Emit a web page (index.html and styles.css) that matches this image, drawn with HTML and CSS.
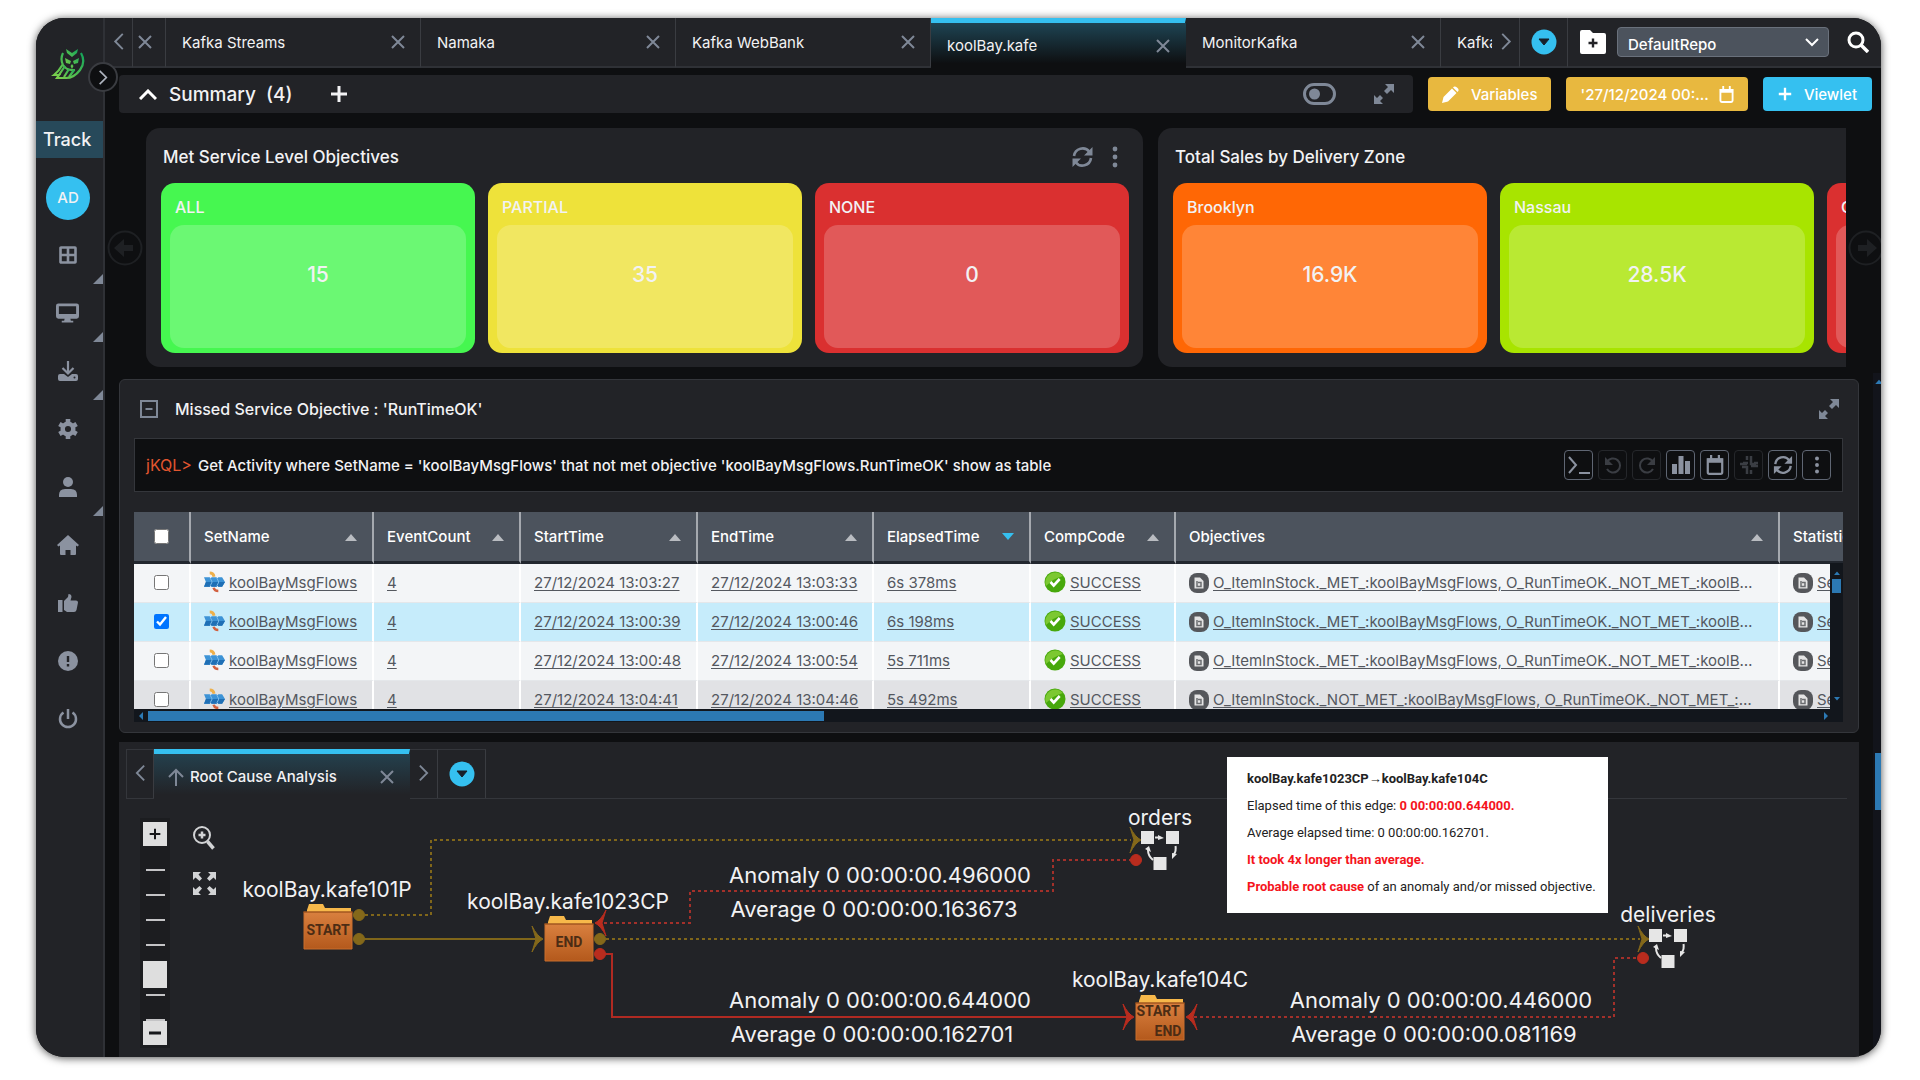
FILE: index.html
```html
<!DOCTYPE html>
<html lang="en">
<head>
    <meta charset="UTF-8">
    <meta name="viewport" content="width=device-width, initial-scale=1.0">
    <title>koolBay.kafe</title>
    <link rel="stylesheet" href="styles.css">
</head>
<body>
<!-- icon sprite -->
<svg class="sprite" aria-hidden="true">
    <symbol id="left" viewBox="0 0 12 18"><path d="M10 1L2 9l8 8" fill="none" stroke="currentColor" stroke-width="2"/></symbol>
    <symbol id="right" viewBox="0 0 12 18"><path d="M2 1l8 8-8 8" fill="none" stroke="currentColor" stroke-width="2"/></symbol>
    <symbol id="close" viewBox="0 0 14 14"><path d="M1 1l12 12M13 1L1 13" fill="none" stroke="currentColor" stroke-width="2"/></symbol>
    <symbol id="plus" viewBox="0 0 18 18"><path d="M9 1v16M1 9h16" fill="none" stroke="currentColor" stroke-width="3"/></symbol>
    <symbol id="drop" viewBox="0 0 26 26"><circle cx="13" cy="13" r="12.500" fill="#35c0f0"/><path d="M8 10h10l-5 6z" fill="#17202a" stroke="#17202a" stroke-linejoin="round"/></symbol>
    <symbol id="expand" viewBox="0 0 20 20"><path d="M11 0h9v9l-3-3-4 4-3-3 4-4zM9 20H0v-9l3 3 3-3 3 3-3 3z" fill="currentColor"/></symbol>
    <symbol id="refresh" viewBox="0 0 22 22"><path d="M2.500 10A8.600 8.600 0 0 1 18 6M19.500 12A8.600 8.600 0 0 1 4 16" fill="none" stroke="currentColor" stroke-width="2.600"/><path d="M21 1v8.500h-8.500zM1 21v-8.500h8.500z" fill="currentColor"/></symbol>
    <symbol id="dots" viewBox="0 0 6 22"><g fill="currentColor"><circle cx="3" cy="3" r="2.400"/><circle cx="3" cy="11" r="2.400"/><circle cx="3" cy="19" r="2.400"/></g></symbol>
    <symbol id="calendar" viewBox="0 0 16 18"><path d="M1.500 4h13v11.500a1.500 1.500 0 0 1-1.500 1.500H3a1.500 1.500 0 0 1-1.500-1.500zM4.500 0v4M11.500 0v4" fill="none" stroke="currentColor" stroke-width="2"/><path d="M1 3h14v4H1z" fill="currentColor"/></symbol>
    <symbol id="sort" viewBox="0 0 12 8"><path d="M0 8L6 1l6 7z" fill="currentColor"/></symbol>
    <symbol id="undo" viewBox="0 0 18 18"><path d="M3 6a7 7 0 1 1 0 7" fill="none" stroke="currentColor" stroke-width="2"/><path d="M1 1v8h8z" fill="currentColor"/></symbol>
    <symbol id="flow" viewBox="0 0 22 22"><path d="M6 1.500q4 0 4.500 4" fill="none" stroke="#eeb04a" stroke-width="3"/><path d="M10 17q1 3.500 5 3.500" fill="none" stroke="#d2603f" stroke-width="2.600"/><path d="M0 6h6l1 1 1-1h5l1 1 1-1h4l3 5-3 5h-4l-1-1-1 1H8l-1-1-1 1H0l2-5z" fill="#3d93d6"/><path d="M0 16l2-5h20l-3 5h-4l-1-1-1 1H8l-1-1-1 1z" fill="#1f6fb5"/><path d="M6.500 7l2 4-2 4M13.500 7l2 4-2 4" fill="none" stroke="#7fbdea"/></symbol>
    <symbol id="ok" viewBox="0 0 22 22"><circle cx="11" cy="11" r="10.500" fill="#47a80c"/><path d="M2 15A10 10 0 0 1 19 5Q10 7 2 15z" fill="#7cc832"/><path d="M6.500 11l3.200 3.500 6-6.500" fill="none" stroke="#fff" stroke-width="2.600"/></symbol>
    <symbol id="doc" viewBox="0 0 20 20"><rect width="20" height="20" rx="8" fill="#55575b"/><path d="M5.500 4.500h5.500l3.500 3.500v7.500h-9z" fill="#e4e4e4"/><path d="M8 8v5.500h4v-4h-3" fill="none" stroke="#6b6d70" stroke-width="1.500"/></symbol>
    <symbol id="round-arrow" viewBox="0 0 36 36"><circle cx="18" cy="18" r="16.500" fill="none" stroke="currentColor" stroke-width="2"/><path d="M7 18l10-9v6h9v6h-9v6z" fill="currentColor"/></symbol>
</svg>

<div class="window">
    <nav class="sidebar">
        <div class="logo">
            <svg width="34" height="32" viewBox="0 0 34 32" aria-label="Logo">
                <defs><linearGradient id="owl" x1="0" y1="1" x2="1" y2="0"><stop offset="0" stop-color="#7fd04a"/><stop offset="1" stop-color="#12a45a"/></linearGradient></defs>
                <g fill="none" stroke="url(#owl)" stroke-width="2.200">
                    <path d="M12 4Q9 10 12 16q4 6 12 5M30 4q5 9-1 17-6 8-14 8H6l2-3H3q5-4 9-11"/>
                    <path d="M8 26l6-9M13 28l5-8M18 28l5-7"/>
                </g>
                <path d="M15 0l6 4 6-4-1 4-5 4-5-4zM14 9l6 3-1 3-4-1zM28 9l-6 3 1 3 4-1zM21 15l1.500 2-1.500 3-1.500-3z" fill="url(#owl)"/>
            </svg>
        </div>
        <button class="sidebar-toggle" aria-label="Open menu"><svg width="10" height="15"><use href="#right"/></svg></button>
        <div class="section-name">Track</div>
        <div class="avatar">AD</div>
        <a class="nav-item has-sub" href="#" aria-label="Dashboards"><svg width="18" height="18" viewBox="0 0 18 18"><path d="M2 1.500h14q.5 0 .5.500v14q0 .5-.5.500H2q-.5 0-.5-.5V2q0-.5.5-.5zM9 1v16M1 9h16" fill="none" stroke="currentColor" stroke-width="2.600"/></svg></a>
        <a class="nav-item has-sub" href="#" aria-label="Monitor"><svg width="23" height="20" viewBox="0 0 24 20"><path d="M2.500 0h19A2.500 2.500 0 0 1 24 2.500v11a2.500 2.500 0 0 1-2.500 2.500H15l.5 2H18v2H6v-2h2.500l.5-2H2.500A2.500 2.500 0 0 1 0 13.500v-11A2.500 2.500 0 0 1 2.500 0zM3 3v8h18V3z" fill="currentColor"/></svg></a>
        <a class="nav-item has-sub" href="#" aria-label="Import"><svg width="20" height="20" viewBox="0 0 20 20"><path d="M10 0v12M4.500 7l5.500 5.500L15.500 7" fill="none" stroke="currentColor" stroke-width="2.200"/><path d="M2 13h4l4 3 4-3h4q2 0 2 2v3q0 2-2 2H2q-2 0-2-2v-3q0-2 2-2z" fill="currentColor"/><circle cx="16.500" cy="16.500" r="1" fill="#222327"/></svg></a>
        <a class="nav-item" href="#" aria-label="Settings"><svg width="20" height="20" viewBox="0 0 20 20"><circle cx="10" cy="10" r="5.300" fill="none" stroke="currentColor" stroke-width="4.500"/><path d="M10 0v4M10 16v4M1.400 5l3.400 2M15.200 13l3.400 2M1.400 15l3.400-2M15.200 7l3.400-2" stroke="currentColor" stroke-width="4.600"/></svg></a>
        <a class="nav-item has-sub" href="#" aria-label="Users"><svg width="18" height="20" viewBox="0 0 18 20"><circle cx="9" cy="5" r="5" fill="currentColor"/><path d="M0 20v-2q0-6 6-6h6q6 0 6 6v2z" fill="currentColor"/></svg></a>
        <a class="nav-item" href="#" aria-label="Home"><svg width="22" height="20" viewBox="0 0 22 20"><path d="M11 0l11 10-1.500 1.500L19 10.500V19q0 1-1 1h-4.500v-5h-5v5H4q-1 0-1-1v-8.500l-1.500 1L0 10z" fill="currentColor"/></svg></a>
        <a class="nav-item" href="#" aria-label="Feedback"><svg width="20" height="18" viewBox="0 0 20 18"><path d="M0 6h4.500v12H0zM6 7l4-4 .5-3q3 0 3 3l-1 3.500H18q2 0 2 2L18.500 16q-.5 2-2.500 2H9l-3-2z" fill="currentColor"/></svg></a>
        <a class="nav-item" href="#" aria-label="Alerts"><svg width="20" height="20" viewBox="0 0 20 20"><circle cx="10" cy="10" r="10" fill="currentColor"/><path d="M10 5v6M10 13v2.500" stroke="#222327" stroke-width="2.400"/></svg></a>
        <a class="nav-item" href="#" aria-label="Log out"><svg width="20" height="20" viewBox="0 0 20 20"><path d="M10 0v10M5.500 3.500a8 8 0 1 0 9 0" fill="none" stroke="currentColor" stroke-width="2.500"/></svg></a>
    </nav>

    <main class="main">
        <header class="topbar">
            <button class="tab-nav" aria-label="Previous tabs"><svg width="12" height="17"><use href="#left"/></svg></button>
            <div class="tabs">
                <div class="tab tab-cut"><button class="close" aria-label="Close"><svg width="14" height="14"><use href="#close"/></svg></button></div>
                <div class="tab"><span>Kafka Streams</span><button class="close" aria-label="Close"><svg width="14" height="14"><use href="#close"/></svg></button></div>
                <div class="tab"><span>Namaka</span><button class="close" aria-label="Close"><svg width="14" height="14"><use href="#close"/></svg></button></div>
                <div class="tab"><span>Kafka WebBank</span><button class="close" aria-label="Close"><svg width="14" height="14"><use href="#close"/></svg></button></div>
                <div class="tab active"><span>koolBay.kafe</span><button class="close" aria-label="Close"><svg width="14" height="14"><use href="#close"/></svg></button></div>
                <div class="tab"><span>MonitorKafka</span><button class="close" aria-label="Close"><svg width="14" height="14"><use href="#close"/></svg></button></div>
                <div class="tab"><span>Kafka</span></div>
            </div>
            <button class="tab-nav" aria-label="Next tabs"><svg width="12" height="17"><use href="#right"/></svg></button>
            <button class="tab-list" aria-label="All tabs"><svg width="26" height="26"><use href="#drop"/></svg></button>
            <div class="repo">
                <button class="plain" aria-label="New folder"><svg width="26" height="24" viewBox="0 0 26 24"><path d="M2 0h8l3 3h11q2 0 2 2v17q0 2-2 2H2q-2 0-2-2V2q0-2 2-2z" fill="#fff"/><path d="M13 8.500v9M8.500 13h9" stroke="#222327" stroke-width="2.400"/></svg></button>
                <label class="repo-select">
                    <select aria-label="Repository"><option>DefaultRepo</option></select>
                    <svg width="14" height="9" viewBox="0 0 14 9"><path d="M1 1l6 6 6-6" fill="none" stroke="#fff" stroke-width="2"/></svg>
                </label>
                <button class="plain" aria-label="Search"><svg width="22" height="22" viewBox="0 0 22 22"><circle cx="9" cy="9" r="7" fill="none" stroke="#fff" stroke-width="3"/><path d="M14 14l7 7" stroke="#fff" stroke-width="3.500"/></svg></button>
            </div>
        </header>

        <div class="toolbar">
            <div class="summary">
                <svg width="18" height="11" viewBox="0 0 18 11"><path d="M1 10l8-8 8 8" fill="none" stroke="#fff" stroke-width="3"/></svg>
                <h2>Summary &nbsp;(4)</h2>
                <button class="plain" aria-label="Add"><svg width="18" height="18"><use href="#plus"/></svg></button>
                <button class="plain muted toggle" aria-label="Toggle"><svg width="33" height="22" viewBox="0 0 33 22"><rect x="1.500" y="1.500" width="30" height="19" rx="9.500" fill="none" stroke="currentColor" stroke-width="3"/><circle cx="11.500" cy="11" r="5.500" fill="currentColor"/></svg></button>
                <button class="plain muted" aria-label="Expand"><svg width="20" height="20"><use href="#expand"/></svg></button>
            </div>
            <button class="btn gold"><svg width="17" height="17" viewBox="0 0 17 17"><path d="M0 17l1.500-6L10 2.500 14.500 7 6 15.500zM11 1.500Q12.500-.5 15 1.500q3 2.500.5 4.500z" fill="#fff"/></svg>Variables</button>
            <button class="btn gold date">'27/12/2024 00:...<svg width="15" height="17"><use href="#calendar"/></svg></button>
            <button class="btn blue"><svg width="14" height="14"><use href="#plus"/></svg>Viewlet</button>
        </div>

        <section class="viewlets">
            <button class="scroll-arrow" aria-label="Scroll left"><svg width="36" height="36"><use href="#round-arrow"/></svg></button>
            <div class="viewlet-strip">
                <article class="viewlet">
                    <header><h3>Met Service Level Objectives</h3><button class="plain muted" aria-label="Refresh"><svg width="23" height="22"><use href="#refresh"/></svg></button><button class="plain muted" aria-label="More"><svg width="6" height="22"><use href="#dots"/></svg></button></header>
                    <div class="tiles">
                        <div class="tile green"><h4>ALL</h4><p>15</p></div>
                        <div class="tile yellow"><h4>PARTIAL</h4><p>35</p></div>
                        <div class="tile red"><h4>NONE</h4><p>0</p></div>
                    </div>
                </article>
                <article class="viewlet">
                    <header><h3>Total Sales by Delivery Zone</h3></header>
                    <div class="tiles">
                        <div class="tile orange"><h4>Brooklyn</h4><p>16.9K</p></div>
                        <div class="tile lime"><h4>Nassau</h4><p>28.5K</p></div>
                        <div class="tile red"><h4>Queens</h4><p></p></div>
                    </div>
                </article>
            </div>
            <button class="scroll-arrow flip" aria-label="Scroll right"><svg width="36" height="36"><use href="#round-arrow"/></svg></button>
        </section>

        <div class="page">
            <section class="panel">
                <header class="panel-head">
                    <button class="plain muted" aria-label="Collapse"><svg width="18" height="18" viewBox="0 0 18 18"><path d="M1 1h16v16H1zM5.500 9h7" fill="none" stroke="currentColor" stroke-width="2"/></svg></button>
                    <h3>Missed Service Objective : 'RunTimeOK'</h3>
                    <button class="plain muted" aria-label="Expand"><svg width="20" height="20"><use href="#expand"/></svg></button>
                </header>
                <div class="query">
                    <span class="prompt">jKQL&gt;</span>
                    <span class="query-text">Get Activity where SetName = 'koolBayMsgFlows' that not met objective 'koolBayMsgFlows.RunTimeOK' show as table</span>
                    <div class="query-tools">
                        <button aria-label="Console"><svg width="22" height="20" viewBox="0 0 22 20"><path d="M1 2l7 8-7 8M11 18h11" fill="none" stroke="currentColor" stroke-width="2"/></svg></button>
                        <button aria-label="Undo" disabled><svg width="18" height="18"><use href="#undo"/></svg></button>
                        <button aria-label="Redo" disabled><svg class="mirror" width="18" height="18"><use href="#undo"/></svg></button>
                        <button aria-label="Chart"><svg width="18" height="18" viewBox="0 0 18 18"><path d="M0 8h5v10H0zM6.500 0h5v18h-5zM13 5h5v13h-5z" fill="currentColor"/></svg></button>
                        <button aria-label="Dates"><svg width="18" height="20"><use href="#calendar"/></svg></button>
                        <button aria-label="Slack" disabled><svg width="18" height="18" viewBox="0 0 18 18"><path d="M7 0v4M11 0v8h5M18 7h-4M7 8H0M2 11h5v7M11 14v4M11 10h7M3 7h5" fill="none" stroke="currentColor" stroke-width="2.500"/></svg></button>
                        <button aria-label="Refresh"><svg width="20" height="20"><use href="#refresh"/></svg></button>
                        <button aria-label="More"><svg width="6" height="18"><use href="#dots"/></svg></button>
                    </div>
                </div>

                <div class="grid">
                    <table>
                        <colgroup><col class="c-check"><col class="c-set"><col class="c-count"><col class="c-start"><col class="c-end"><col class="c-elapsed"><col class="c-comp"><col class="c-obj"><col class="c-stat"></colgroup>
                        <thead>
                            <tr>
                                <th><input type="checkbox" aria-label="Select all"></th>
                                <th><div>SetName<svg width="12" height="8"><use href="#sort"/></svg></div></th>
                                <th><div>EventCount<svg width="12" height="8"><use href="#sort"/></svg></div></th>
                                <th><div>StartTime<svg width="12" height="8"><use href="#sort"/></svg></div></th>
                                <th><div>EndTime<svg width="12" height="8"><use href="#sort"/></svg></div></th>
                                <th><div>ElapsedTime<svg class="desc" width="12" height="8"><use href="#sort"/></svg></div></th>
                                <th><div>CompCode<svg width="12" height="8"><use href="#sort"/></svg></div></th>
                                <th><div>Objectives<svg width="12" height="8"><use href="#sort"/></svg></div></th>
                                <th><div>Statistics</div></th>
                            </tr>
                        </thead>
                        <tbody>
                            <tr>
                                <td><input type="checkbox" aria-label="Select row"></td>
                                <td><svg width="21" height="22"><use href="#flow"/></svg><a href="#">koolBayMsgFlows</a></td>
                                <td><a href="#">4</a></td>
                                <td><a href="#">27/12/2024 13:03:27</a></td>
                                <td><a href="#">27/12/2024 13:03:33</a></td>
                                <td><a href="#">6s 378ms</a></td>
                                <td><svg width="22" height="22"><use href="#ok"/></svg><a href="#">SUCCESS</a></td>
                                <td class="long"><svg width="20" height="20"><use href="#doc"/></svg><a href="#">O_ItemInStock._MET_:koolBayMsgFlows, O_RunTimeOK._NOT_MET_:koolBayMsgFlows</a></td>
                                <td><svg width="20" height="20"><use href="#doc"/></svg><a href="#">Set statistics</a></td>
                            </tr>
                            <tr class="selected">
                                <td><input type="checkbox" aria-label="Select row" checked></td>
                                <td><svg width="21" height="22"><use href="#flow"/></svg><a href="#">koolBayMsgFlows</a></td>
                                <td><a href="#">4</a></td>
                                <td><a href="#">27/12/2024 13:00:39</a></td>
                                <td><a href="#">27/12/2024 13:00:46</a></td>
                                <td><a href="#">6s 198ms</a></td>
                                <td><svg width="22" height="22"><use href="#ok"/></svg><a href="#">SUCCESS</a></td>
                                <td class="long"><svg width="20" height="20"><use href="#doc"/></svg><a href="#">O_ItemInStock._MET_:koolBayMsgFlows, O_RunTimeOK._NOT_MET_:koolBayMsgFlows</a></td>
                                <td><svg width="20" height="20"><use href="#doc"/></svg><a href="#">Set statistics</a></td>
                            </tr>
                            <tr>
                                <td><input type="checkbox" aria-label="Select row"></td>
                                <td><svg width="21" height="22"><use href="#flow"/></svg><a href="#">koolBayMsgFlows</a></td>
                                <td><a href="#">4</a></td>
                                <td><a href="#">27/12/2024 13:00:48</a></td>
                                <td><a href="#">27/12/2024 13:00:54</a></td>
                                <td><a href="#">5s 711ms</a></td>
                                <td><svg width="22" height="22"><use href="#ok"/></svg><a href="#">SUCCESS</a></td>
                                <td class="long"><svg width="20" height="20"><use href="#doc"/></svg><a href="#">O_ItemInStock._MET_:koolBayMsgFlows, O_RunTimeOK._NOT_MET_:koolBayMsgFlows</a></td>
                                <td><svg width="20" height="20"><use href="#doc"/></svg><a href="#">Set statistics</a></td>
                            </tr>
                            <tr class="shade">
                                <td><input type="checkbox" aria-label="Select row"></td>
                                <td><svg width="21" height="22"><use href="#flow"/></svg><a href="#">koolBayMsgFlows</a></td>
                                <td><a href="#">4</a></td>
                                <td><a href="#">27/12/2024 13:04:41</a></td>
                                <td><a href="#">27/12/2024 13:04:46</a></td>
                                <td><a href="#">5s 492ms</a></td>
                                <td><svg width="22" height="22"><use href="#ok"/></svg><a href="#">SUCCESS</a></td>
                                <td class="long"><svg width="20" height="20"><use href="#doc"/></svg><a href="#">O_ItemInStock._NOT_MET_:koolBayMsgFlows, O_RunTimeOK._NOT_MET_:koolBayMsgFlows</a></td>
                                <td><svg width="20" height="20"><use href="#doc"/></svg><a href="#">Set statistics</a></td>
                            </tr>
                        </tbody>
                    </table>
                    <div class="v-scroll"><svg width="6" height="4"><use href="#sort"/></svg><i></i><svg class="down" width="6" height="4"><use href="#sort"/></svg></div>
                </div>
                <div class="h-scroll"><svg width="4" height="8" viewBox="0 0 4 8"><path d="M4 0v8L0 4z" fill="currentColor"/></svg><i></i><svg class="end" width="4" height="8" viewBox="0 0 4 8"><path d="M0 0v8l4-4z" fill="currentColor"/></svg></div>
            </section>

            <section class="panel analysis">
                <header class="subtabs">
                    <button class="tab-nav" aria-label="Previous"><svg width="11" height="20"><use href="#left"/></svg></button>
                    <div class="tab active">
                        <svg class="up" width="16" height="18" viewBox="0 0 16 18"><path d="M8 18V2M1 9l7-7 7 7" fill="none" stroke="currentColor" stroke-width="2"/></svg>
                        <span>Root Cause Analysis</span>
                        <button class="close" aria-label="Close"><svg width="14" height="14"><use href="#close"/></svg></button>
                    </div>
                    <button class="tab-nav" aria-label="Next"><svg width="11" height="20"><use href="#right"/></svg></button>
                    <button class="tab-list" aria-label="All tabs"><svg width="26" height="26"><use href="#drop"/></svg></button>
                </header>

                <div class="canvas">
                    <svg class="graph" width="1740" height="260" viewBox="120 799 1740 260">
                        <defs>
                            <linearGradient id="box" x1="0" y1="0" x2="0" y2="1"><stop offset="0" stop-color="#d9803f"/><stop offset="1" stop-color="#b4591c"/></linearGradient>
                            <g id="folder">
                                <path d="M4 6l2-6h14l2 4h26v6H4z" fill="#f7b84a"/>
                                <path d="M1 8h48v37H1z" fill="url(#box)" stroke="#c96f2d"/>
                                <path d="M0 8h50" stroke="#8f4a1b"/>
                            </g>
                            <g id="cycle" fill="#e6e6e6">
                                <path d="M0 0h13v13H0zM25 0h13v13H25zM12.500 26h13v13h-13z"/>
                                <path d="M17 4l6 3-6 2zM31 22l5 1-5 5zM4 18l4-3 2 6z"/>
                                <path d="M14 6.500h5M34.500 15q1 5-2 9M7 19q0 6 5 10" fill="none" stroke="#e6e6e6" stroke-width="2"/>
                            </g>
                            <path id="head" d="M-11-13Q-6-3 0 0-6 3-11 13L-7 0z" stroke-width="1"/>
                        </defs>

                        <!-- edges -->
                        <g fill="none" stroke-width="2">
                            <path d="M359 915h72v-75h700M600 939h1040" stroke="#80661a" stroke-dasharray="3 3"/>
                            <path d="M359 939h178" stroke="#80661a"/>
                            <path d="M604 923h86v-32h363v-31h83M1194 1017h420v-59h29" stroke="#a3302a" stroke-dasharray="3 3"/>
                            <path d="M600 954h12v63h517" stroke="#b02a22"/>
                        </g>
                        <g fill="#84681a" stroke="#84681a">
                            <circle cx="359" cy="915" r="5.500"/><circle cx="359" cy="939" r="5.500"/><circle cx="600" cy="939" r="5.500"/>
                            <use href="#head" x="543" y="939"/><use href="#head" x="1141" y="840"/><use href="#head" x="1649" y="939"/>
                        </g>
                        <g fill="#b92c1e" stroke="#b92c1e">
                            <circle cx="600" cy="954" r="5.500"/><circle cx="1136" cy="860" r="5.500"/><circle cx="1643" cy="958" r="5.500"/>
                            <use href="#head" x="1134" y="1017"/>
                            <use href="#head" transform="translate(595 923) rotate(180)"/>
                            <use href="#head" transform="translate(1186 1017) rotate(180)"/>
                        </g>

                        <!-- nodes -->
                        <use href="#folder" x="303" y="904"/>
                        <use href="#folder" x="544" y="916"/>
                        <use href="#folder" x="1135" y="995"/>
                        <use href="#cycle" x="1141" y="831"/>
                        <use href="#cycle" x="1649" y="929"/>
                        <g class="node-tag">
                            <text x="328" y="935">START</text>
                            <text x="569" y="947">END</text>
                            <text x="1158" y="1016">START</text>
                            <text x="1168" y="1036">END</text>
                        </g>
                        <g class="node-name">
                            <text x="327" y="897">koolBay.kafe101P</text>
                            <text x="568" y="909">koolBay.kafe1023CP</text>
                            <text x="1160" y="825">orders</text>
                            <text x="1668" y="922">deliveries</text>
                            <text x="1160" y="987">koolBay.kafe104C</text>
                        </g>
                        <g class="edge-name">
                            <text x="880" y="883">Anomaly 0 00:00:00.496000</text>
                            <text x="874" y="917">Average 0 00:00:00.163673</text>
                            <text x="880" y="1008">Anomaly 0 00:00:00.644000</text>
                            <text x="872" y="1042">Average 0 00:00:00.162701</text>
                            <text x="1441" y="1008">Anomaly 0 00:00:00.446000</text>
                            <text x="1434" y="1042">Average 0 00:00:00.081169</text>
                        </g>
                    </svg>

                    <div class="zoom">
                        <button aria-label="Zoom in"><svg width="12" height="12"><use href="#plus"/></svg></button>
                        <input type="range" min="0" max="100" value="22" aria-label="Zoom level">
                        <button aria-label="Zoom out"><svg width="12" height="4" viewBox="0 0 12 4"><path d="M0 2h12" stroke="currentColor" stroke-width="3"/></svg></button>
                    </div>
                    <div class="view-tools">
                        <button class="plain" aria-label="Zoom to area"><svg width="22" height="24" viewBox="0 0 22 24"><circle cx="9" cy="9" r="8" fill="none" stroke="currentColor" stroke-width="2"/><path d="M9 5.500v7M5.500 9h7" stroke="currentColor" stroke-width="2.500"/><path d="M14.500 15.500l6 7" stroke="currentColor" stroke-width="3.500"/></svg></button>
                        <button class="plain" aria-label="Fit to screen"><svg width="23" height="23" viewBox="0 0 23 23"><path d="M0 0h8L5.500 2.500l3.500 4-2.500 2.500-4-3.500L0 8zM23 0v8l-2.500-2.500-4 3.500L14 6.500l3.500-4L15 0zM0 23v-8l2.500 2.500 4-3.500L9 16.500l-3.500 4L8 23zM23 23h-8l2.500-2.500-3.500-4 2.500-2.500 4 3.500L23 15z" fill="currentColor"/></svg></button>
                    </div>
                </div>

                <aside class="note">
                    <p><b>koolBay.kafe1023CP→koolBay.kafe104C</b></p>
                    <p>Elapsed time of this edge: <b class="alert">0 00:00:00.644000.</b></p>
                    <p>Average elapsed time: 0 00:00:00.162701.</p>
                    <p><b class="alert">It took 4x longer than average.</b></p>
                    <p><b class="alert">Probable root cause</b> of an anomaly and/or missed objective.</p>
                </aside>
            </section>
            <div class="page-scroll"><svg width="8" height="5"><use href="#sort"/></svg><i></i></div>
        </div>
    </main>
</div>
</body>
</html>
```
FILE: styles.css
```css
* {
    box-sizing: border-box;
}

body {
    margin: 0;
    padding: 18px 39px 23px 36px;
    height: 100vh;
    background: #fff;
    color: #f2f2f4;
    font-family: Inter, "Liberation Sans", sans-serif;
    font-size: 15px;
}

h2, h3, h4, p {
    margin: 0;
    font-weight: 500;
}

button {
    font: inherit;
    color: inherit;
    background: none;
    border: none;
    padding: 0;
    cursor: pointer;
}

svg {
    display: block;
    flex: none;
}

.sprite {
    position: absolute;
    width: 0;
    height: 0;
}

.plain {
    display: flex;
}

.muted {
    color: #7f8897;
}

.window {
    display: flex;
    height: 100%;
    border-radius: 28px;
    overflow: hidden;
    background: #0e0f11;
    box-shadow: 0 1px 8px rgba(0, 0, 0, 0.7);
}

/* sidebar */
.sidebar {
    position: relative;
    flex: none;
    width: 69px;
    background: #222327;
    border-right: 2px solid #2f3136;
    display: flex;
    flex-direction: column;
}

.logo {
    height: 103px;
    padding: 31px 0 0 15px;
}

.sidebar-toggle {
    position: absolute;
    z-index: 2;
    top: 44px;
    right: -15px;
    width: 30px;
    height: 30px;
    border-radius: 50%;
    border: 2px solid #3a3c41;
    background: #0e0f11;
    color: #aeb4bf;
    display: flex;
    align-items: center;
    justify-content: center;
}

.section-name {
    height: 37px;
    line-height: 38px;
    padding-left: 7px;
    background: #27495a;
    font-size: 18px;
    font-weight: 500;
}

.avatar {
    width: 44px;
    height: 44px;
    margin: 18px 0 6px 10px;
    border-radius: 50%;
    background: #35c0f0;
    line-height: 44px;
    text-align: center;
    font-weight: 500;
}

.nav-item {
    position: relative;
    height: 58px;
    padding-right: 4px;
    color: #8b92a0;
    display: flex;
    align-items: center;
    justify-content: center;
}

.has-sub::after {
    content: "";
    position: absolute;
    right: 0;
    bottom: 0;
    border-left: 10px solid transparent;
    border-bottom: 10px solid #7f8897;
}

/* top tabs */
.main {
    flex: 1;
    min-width: 0;
    display: flex;
    flex-direction: column;
}

.topbar {
    flex: none;
    height: 50px;
    display: flex;
    background: #222327;
}

.tab-nav,
.tab-list,
.tab,
.repo {
    border-bottom: 2px solid #2f3136;
    border-right: 1px solid #3a3c41;
    display: flex;
    align-items: center;
}

.tab-nav {
    flex: none;
    width: 28px;
    justify-content: center;
    color: #7f8897;
    padding-bottom: 2px;
}

.tab-list {
    flex: none;
    width: 48px;
    justify-content: center;
}

.tabs {
    flex: 1;
    min-width: 0;
    display: flex;
    overflow: hidden;
}

.tab {
    flex: none;
    width: 255px;
    padding: 0 15px 0 16px;
    justify-content: space-between;
}

.tab-cut {
    width: 33px;
    padding-left: 5px;
}

.tab.active {
    border-top: 5px solid #35c0f0;
    border-bottom: none;
    border-right-color: transparent;
    background: linear-gradient(#1e4453, #0e0f11 90%);
}

.close {
    display: flex;
    color: #7f8897;
}

.repo {
    flex: none;
    border-right: none;
    gap: 11px;
    padding: 0 12px;
}

.repo-select {
    position: relative;
    margin-right: 7px;
}

.repo-select select {
    appearance: none;
    width: 212px;
    height: 30px;
    padding: 4px 10px 0;
    border: 1px solid #6a717c;
    border-radius: 4px;
    background: #4c535d;
    color: #fff;
    font: 500 15px Inter, "Liberation Sans", sans-serif;
}

.repo-select svg {
    position: absolute;
    top: 11px;
    right: 10px;
    pointer-events: none;
}

/* toolbar */
.toolbar {
    flex: none;
    display: flex;
    align-items: center;
    gap: 15px;
    padding: 7px 9px 0 14px;
}

.summary {
    flex: 1;
    display: flex;
    align-items: center;
    height: 38px;
    padding: 0 19px 0 20px;
    background: #222327;
    border-radius: 4px;
}

.summary h2 {
    margin: 0 38px 0 12px;
    font-size: 19px;
}

.toggle {
    margin: 0 38px 0 auto;
}

.btn {
    display: flex;
    align-items: center;
    justify-content: center;
    gap: 12px;
    height: 34px;
    padding: 0 14px;
    border-radius: 4px;
    color: #fff;
    font-weight: 500;
}

.gold {
    background: #e8b83f;
}

.date {
    gap: 10px;
}

.blue {
    padding: 0 15px;
    background: #35c0f0;
}

/* viewlets */
.viewlets {
    flex: none;
    display: flex;
    align-items: center;
    padding-top: 15px;
}

.scroll-arrow {
    flex: none;
    width: 41px;
    color: #1e2023;
    padding-left: 2px;
}

.scroll-arrow.flip {
    width: 35px;
    padding-left: 0;
}

.flip svg {
    transform: scaleX(-1);
    margin-left: 2px;
}

.viewlet-strip {
    flex: 1;
    min-width: 0;
    display: flex;
    gap: 15px;
    overflow: hidden;
}

.viewlet {
    flex: none;
    height: 239px;
    padding: 0 14px 0 15px;
    border-radius: 14px;
    background: #222327;
}

.viewlet header {
    display: flex;
    align-items: center;
    gap: 18px;
    height: 55px;
    padding: 2px 11px 0 2px;
}

.viewlet h3 {
    flex: 1;
    font-size: 17px;
}

.tiles {
    display: flex;
    gap: 13px;
}

.tile {
    width: 314px;
    height: 170px;
    padding: 14px 9px 5px;
    border-radius: 14px;
    display: flex;
    flex-direction: column;
}

.tile h4 {
    height: 28px;
    padding-left: 5px;
    line-height: 20px;
    font-size: 16px;
}

.tile p {
    flex: 1;
    display: flex;
    align-items: center;
    justify-content: center;
    padding-bottom: 24px;
    border-radius: 14px;
    background: rgba(255, 255, 255, 0.2);
    font-size: 21px;
}

.green { background: #46f750; }
.yellow { background: #eee23a; }
.red { background: #da3030; }
.orange { background: #ff6705; }
.lime { background: #a8e400; }

/* panels */
.page {
    position: relative;
    flex: 1;
    min-height: 0;
    padding: 12px 22px 0 14px;
    display: flex;
    flex-direction: column;
    gap: 9px;
}

.panel {
    flex: none;
    padding: 0 15px 10px 14px;
    border: 1px solid #34363b;
    border-radius: 6px;
    background: #222327;
}

.panel-head {
    display: flex;
    align-items: center;
    gap: 17px;
    height: 58px;
    padding: 0 4px 0 6px;
}

.panel-head h3 {
    flex: 1;
    font-size: 16px;
}

.query {
    display: flex;
    align-items: center;
    height: 54px;
    padding: 0 11px;
    border: 1px solid #34363b;
    background: #0e0f11;
}

.prompt {
    color: #e2562f;
    font-size: 16px;
    margin-right: 6px;
}

.query-text {
    flex: 1;
    font-weight: 500;
}

.query-tools {
    display: flex;
    gap: 5px;
}

.query-tools button {
    display: flex;
    align-items: center;
    justify-content: center;
    width: 29px;
    height: 30px;
    border: 1px solid #5f6673;
    border-radius: 4px;
    color: #8b92a0;
}

.query-tools button:disabled {
    border-color: #25272b;
    color: #3a3d43;
}

.mirror {
    transform: scaleX(-1);
}

/* table */
.grid {
    position: relative;
    height: 197px;
    margin-top: 20px;
    overflow: hidden;
    background: #4c535d;
}

table {
    width: 1797px;
    table-layout: fixed;
    border-collapse: separate;
    border-spacing: 0;
}

.c-check { width: 57px; }
.c-set { width: 183px; }
.c-count { width: 147px; }
.c-start { width: 177px; }
.c-end { width: 176px; }
.c-elapsed { width: 157px; }
.c-comp { width: 145px; }
.c-obj { width: 604px; }
.c-stat { width: 151px; }

th {
    height: 52px;
    padding: 0 15px 0 13px;
    background: #4c535d;
    border-right: 2px solid #a5a9af;
    border-bottom: 3px solid #22272f;
    text-align: left;
    font-size: 15px;
    font-weight: 500;
    color: #fff;
}

th:first-child,
td:first-child {
    padding: 0;
    text-align: center;
}

th div {
    display: flex;
    align-items: center;
    justify-content: space-between;
    color: #fff;
}

th svg {
    color: #b9bcc1;
}

th .desc {
    color: #35c0f0;
    transform: scaleY(-1);
}

td {
    height: 39px;
    padding: 0 6px 0 13px;
    background: #f3f5f7;
    border-right: 2px solid #fff;
    border-bottom: 1px solid #e4e7ea;
    color: #54585f;
    font-size: 15px;
    line-height: 24px;
    white-space: nowrap;
    overflow: hidden;
    text-overflow: ellipsis;
}

td.long {
    padding-right: 20px;
}

.selected td {
    background: #c6ecfb;
}

.shade td {
    background: #e1e2e5;
}

td a {
    color: #54585f;
    text-underline-offset: 2px;
}

td svg {
    display: inline-block;
    vertical-align: -5px;
    margin-right: 4px;
}

input[type="checkbox"] {
    width: 15px;
    height: 15px;
    margin: 0;
    vertical-align: -2px;
}

.v-scroll {
    position: absolute;
    right: 0;
    top: 51px;
    bottom: 0;
    width: 13px;
    padding: 8px 2px;
    background: #12161c;
    color: #2c79b3;
    display: flex;
    flex-direction: column;
    align-items: center;
    gap: 4px;
}

.v-scroll i {
    width: 9px;
    height: 14px;
    background: #2c79b3;
}

.v-scroll .down {
    margin-top: auto;
    transform: scaleY(-1);
}

.h-scroll {
    display: flex;
    align-items: center;
    gap: 5px;
    height: 13px;
    padding: 0 15px 0 5px;
    background: #12161c;
    color: #2c79b3;
}

.h-scroll i {
    width: 40%;
    height: 10px;
    background: #2c79b3;
}

.h-scroll .end {
    margin-left: auto;
}

/* root cause analysis */
.analysis {
    position: relative;
    flex: 1;
    min-height: 0;
    padding: 6px 0 0;
    border-bottom: none;
    border-radius: 0;
    border-color: #222327;
    overflow: hidden;
}

.subtabs {
    display: flex;
    height: 50px;
    margin: 0 11px 0 6px;
    border-bottom: 1px solid #34363b;
}

.subtabs .tab-nav,
.subtabs .tab-list {
    border-top: 1px solid #34363b;
    border-bottom: none;
}

.subtabs .tab-nav:first-child {
    border-left: 1px solid #34363b;
}

.subtabs .tab {
    width: 256px;
    margin-bottom: -1px;
    padding: 0 15px 0 14px;
    background: linear-gradient(#24404d, #222327 90%);
}

.subtabs .tab span {
    flex: 1;
    margin-left: 6px;
    font-weight: 500;
}

.up {
    color: #7f8897;
}

.canvas {
    position: relative;
}

.node-name,
.edge-name {
    fill: #f2f2f4;
    font-size: 21px;
    text-anchor: middle;
}

.edge-name {
    font-size: 22px;
}

.node-tag {
    fill: #4c2c14;
    font: bold 14px Roboto, "Liberation Sans", sans-serif;
    text-anchor: middle;
}

.zoom {
    position: absolute;
    left: 20px;
    top: 19px;
    width: 30px;
    height: 230px;
    padding: 4px 0 3px;
    background: #1c1d20;
    display: flex;
    flex-direction: column;
    align-items: center;
}

.zoom button {
    display: flex;
    flex: none;
    align-items: center;
    justify-content: center;
    width: 24px;
    height: 24px;
    background: #dedede;
    color: #16171a;
}

.zoom input {
    appearance: none;
    writing-mode: vertical-lr;
    direction: rtl;
    flex: 1;
    width: 24px;
    margin: 0;
    background: repeating-linear-gradient(transparent 0 23px, #c4c4c6 23px 25px) center 0 / 19px 100% no-repeat;
}

.zoom input::-webkit-slider-thumb {
    appearance: none;
    width: 24px;
    height: 27px;
    background: #dedede;
}

.view-tools {
    position: absolute;
    left: 73px;
    top: 27px;
    color: #d2d3d5;
    display: flex;
    flex-direction: column;
    gap: 22px;
}

.note {
    position: absolute;
    left: 1107px;
    top: 14px;
    width: 381px;
    height: 156px;
    padding: 8px 20px;
    background: #fff;
    color: #222;
    font-family: Roboto, "Liberation Sans", sans-serif;
    font-size: 13px;
    line-height: 27px;
    white-space: nowrap;
}

.note p {
    font-weight: 400;
}

.alert {
    color: #f5141c;
}

.page-scroll {
    position: absolute;
    top: 6px;
    right: 0;
    bottom: 0;
    width: 8px;
    padding-top: 6px;
    background: #12141b;
    color: #2c79b3;
}

.page-scroll svg {
    margin-left: 2px;
}

.page-scroll i {
    display: block;
    width: 6px;
    height: 57px;
    margin: 369px 0 0 auto;
    background: #2c79b3;
}
```
